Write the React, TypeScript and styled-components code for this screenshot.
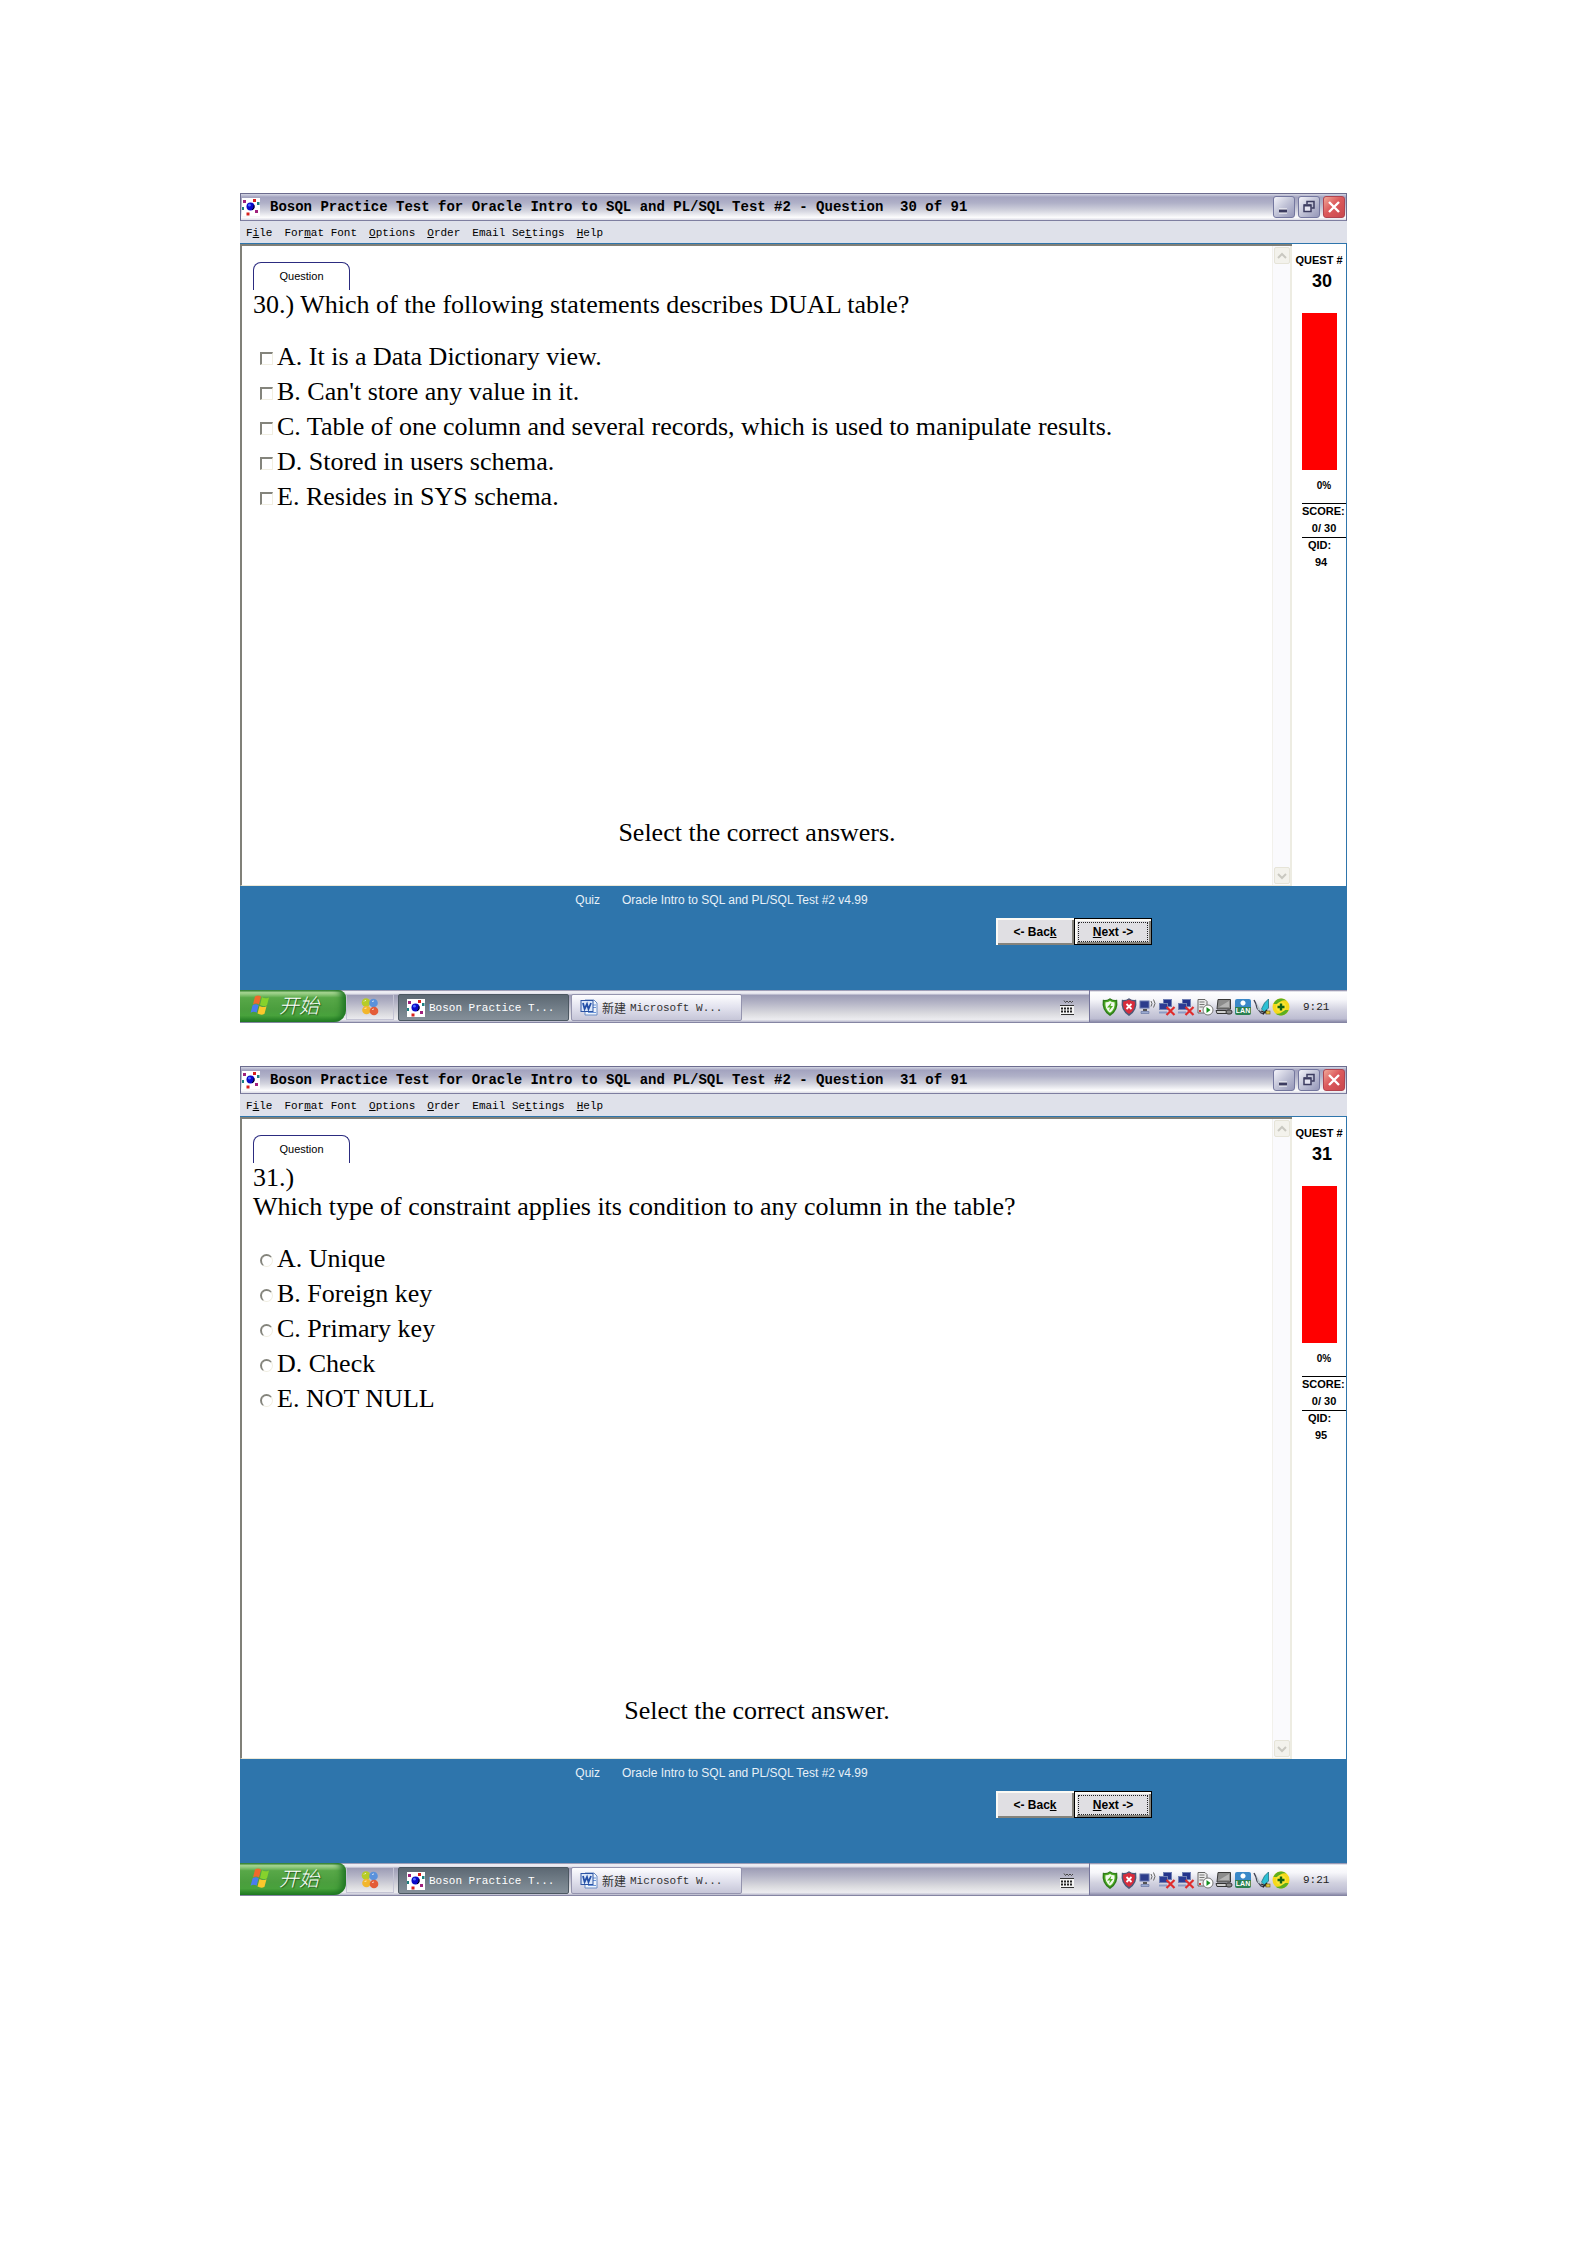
import React from "react";
import styled, { createGlobalStyle, css } from "styled-components";

const SANS = `"Liberation Sans", Arial, sans-serif`;
const SERIF = `"Liberation Serif", "Times New Roman", serif`;
const MONO = `"Liberation Mono", "Courier New", "Noto Sans CJK SC", monospace`;
const BLUE = "#2e75ac";

const GlobalStyle = createGlobalStyle`
  *, *::before, *::after { box-sizing: border-box; }
  body { margin: 0; background: #fff; color: #000; font-family: ${SANS}; }
  button { font: inherit; color: inherit; margin: 0; padding: 0; border: 0; background: none; }
  h1, h2, p, fieldset, dl, dd { margin: 0; padding: 0; border: 0; }
  svg { display: block; flex: none; }
`;

const Page = styled.main`
  display: flex;
  flex-direction: column;
  gap: 43px;
  padding: 193px 241px 193px 240px;
`;

const Screen = styled.section`
  display: flex;
  flex-direction: column;
  background: #fff;
`;

/* ---------- title bar ---------- */

const TitleBar = styled.header`
  display: flex;
  align-items: center;
  height: 28px;
  padding: 0 1px;
  border: 1px solid #6c6c8e;
  border-bottom-color: #7e7ea0;
  background: linear-gradient(#d4d6e4 0, #a3a3bf 12%, #b0b1c8 35%, #d4d5df 65%, #fcfcfd 90%, #dcdce6 100%);
`;

const Title = styled.h1`
  flex: 1;
  padding-left: 10px;
  font: bold 14px/20px ${MONO};
  white-space: pre;
  overflow: hidden;
`;

const WindowButtons = styled.div`
  display: flex;
  gap: 3px;
`;

const WindowButton = styled.button<{ $close?: boolean }>`
  display: grid;
  place-items: center;
  width: 22px;
  height: 22px;
  border: 1px solid ${(p) => (p.$close ? "#b04450" : "#74779f")};
  border-radius: 3px;
  background: ${(p) =>
    p.$close
      ? "linear-gradient(135deg, #f0a898, #dc5a5c 45%, #c8484e)"
      : "linear-gradient(135deg, #f4f4fa, #c0c2d6 50%, #9496b8)"};
`;

/* ---------- menu ---------- */

const MenuBar = styled.nav`
  display: flex;
  align-items: center;
  gap: 12px;
  height: 22px;
  padding: 1px 6px 0;
  background: #dfe1ea;
`;

const MenuItem = styled.button`
  font: 11px/18px ${MONO};
  white-space: nowrap;
`;

/* ---------- work area ---------- */

const WorkArea = styled.div`
  display: flex;
  min-height: 643px;
  border-top: 1px solid ${BLUE};
  border-right: 1px solid ${BLUE};
`;

const QuestionPane = styled.div`
  flex: 1;
  min-width: 0;
  display: flex;
  border: 2px solid #808078;
  border-right: 0;
  border-bottom: 1px solid #ece9d8;
`;

const QuestionBody = styled.div<{ $bottom: number }>`
  flex: 1;
  min-width: 0;
  display: flex;
  flex-direction: column;
  padding: 16px 0 ${(p) => p.$bottom}px 11px;
  font: 26px/29px ${SERIF};
`;

const Tab = styled.h2`
  width: 97px;
  height: 28px;
  border: 1px solid #2c2c80;
  border-bottom: 0;
  border-radius: 8px 8px 0 0;
  font: 11px/26px ${SANS};
  text-align: center;
`;

const QuestionText = styled.p`
  margin-bottom: 23px;
`;

const Options = styled.fieldset`
  display: flex;
  flex-direction: column;
  align-items: flex-start;
  gap: 6px;
  padding-left: 7px;
`;

const Option = styled.label`
  display: flex;
  align-items: baseline;
  gap: 4px;
`;

const Mark = styled.input`
  appearance: none;
  flex: none;
  width: 13px;
  height: 13px;
  margin: 0;
  border: 1px solid #f0eee2;
  ${(p) =>
    p.type === "radio"
      ? css`
          border-width: 2px 1px 1px 2px;
          border-radius: 50%;
          border-top-color: #84847c;
          border-left-color: #84847c;
        `
      : css`
          border-width: 2px 1px 1px 2px;
          border-top-color: #84847c;
          border-left-color: #84847c;
        `}
`;

const Prompt = styled.p`
  margin-top: auto;
  padding-right: 11px;
  text-align: center;
`;

const ScrollTrack = styled.div`
  display: flex;
  flex-direction: column;
  justify-content: space-between;
  align-items: center;
  width: 20px;
  padding: 1px 0;
  background: #fafafd;
  border-left: 1px solid #f2f1ec;
  border-right: 2px solid #edece2;
`;

const ScrollButton = styled.button`
  display: grid;
  place-items: center;
  width: 16px;
  height: 17px;
  border: 1px solid #e6e4d8;
  border-radius: 2px;
  background: #f3f2ec;
`;

/* ---------- score column ---------- */

const ScoreColumn = styled.aside`
  display: flex;
  flex-direction: column;
  align-items: center;
  width: 54px;
  padding-top: 8px;
  font: bold 11px/16px ${SANS};
  white-space: nowrap;
`;

const QuestionNumber = styled.div`
  padding-left: 6px;
  font-size: 18px;
  line-height: 26px;
`;

const Meter = styled.div`
  width: 35px;
  height: 157px;
  margin: 19px 0 8px;
  background: #f00;
`;

const Percent = styled.div`
  padding-left: 10px;
  font-size: 10px;
`;

const Stats = styled.dl`
  align-self: flex-end;
  width: 44px;
  margin-top: 9px;
`;

const StatLabel = styled.dt<{ $indent?: boolean }>`
  border-top: 1px solid #000;
  padding-left: ${(p) => (p.$indent ? 6 : 0)}px;
  line-height: 15px;
`;

const StatValue = styled.dd`
  height: 18px;
  padding-right: 6px;
  line-height: 18px;
  text-align: center;
`;

/* ---------- footer ---------- */

const Footer = styled.footer`
  display: flex;
  flex-direction: column;
  gap: 10px;
  height: 104px;
  padding-top: 6px;
  background: ${BLUE};
`;

const Caption = styled.div`
  display: flex;
  justify-content: center;
  gap: 22px;
  padding-right: 144px;
  color: #e8f1f8;
  font: 12px/16px ${SANS};
`;

const Navigation = styled.div`
  display: flex;
  justify-content: flex-end;
  padding-right: 195px;
`;

const NavButton = styled.button<{ $default?: boolean }>`
  width: 78px;
  height: 27px;
  padding: 2px;
  border: ${(p) => (p.$default ? "1px solid #000" : "0")};
  background: #e0dfe3;
  box-shadow: inset 2px 2px 0 #fbfaf5, inset -2px -2px 0 #85837c;
  font: bold 12px/18px ${SANS};
`;

const FocusRing = styled.span<{ $on?: boolean }>`
  display: block;
  margin: 0 1px;
  border: 1px dotted ${(p) => (p.$on ? "#222" : "transparent")};
`;

/* ---------- taskbar ---------- */

const Taskbar = styled.div`
  display: flex;
  align-items: stretch;
  height: 33px;
  border-bottom: 1px solid #8585a3;
  background: linear-gradient(#77779a 0, #f4f4f8 5%, #e0e0ea 12%, #9c9cb5 16%, #b4b4c6 40%, #dcdce0 75%, #ececf0 92%, #b8b8cc 100%);
`;

const StartButton = styled.button`
  display: flex;
  align-items: center;
  gap: 8px;
  width: 106px;
  padding: 0 0 2px 10px;
  border-radius: 0 8px 12px 0;
  background: linear-gradient(#2d7a2c 0, #b0dc9a 8%, #58a848 24%, #4b9e3e 60%, #48a23c 80%, #1f7a22 100%);
  box-shadow: inset -6px 0 6px -2px #1e7422;
  color: #fff;
  font: italic 300 20px/28px "Noto Sans CJK SC", sans-serif;
  text-shadow: 1px 1px 1px #235d20;
`;

const QuickLaunch = styled.button`
  display: grid;
  place-items: center;
  width: 48px;
  margin: 4px 4px 2px 0;
  border: 1px solid #c4c4d4;
`;

const Task = styled.button<{ $active?: boolean }>`
  display: flex;
  align-items: center;
  gap: 4px;
  height: 27px;
  width: 171px;
  margin: 4px 2px 0 0;
  padding-left: 8px;
  border: 1px solid ${(p) => (p.$active ? "#4c5862" : "#9494ae")};
  border-radius: 2px;
  background: ${(p) =>
    p.$active
      ? "linear-gradient(#5c6873, #75818b 60%, #85909a)"
      : "linear-gradient(#fdfdff, #e2e2ee 50%, #c6c6d8)"};
  color: ${(p) => (p.$active ? "#fff" : "#333")};
  font: 11px/16px ${MONO};
  white-space: nowrap;
`;

const CjkText = styled.span`
  font: 12px/16px "Noto Sans CJK SC", sans-serif;
`;

const InputMethod = styled.div`
  display: grid;
  place-items: center;
  margin-left: auto;
  padding: 4px 14px 0 0;
`;

const Tray = styled.div`
  display: flex;
  align-items: center;
  gap: 1px;
  width: 258px;
  padding: 2px 0 0 11px;
  border-left: 1px solid #75759a;
  background: linear-gradient(#77779a 0, #fff 6%, #f6f6fa 30%, #d2d2e0 62%, #bdbdd2 90%, #8a8aa8 100%);
`;

const Clock = styled.time`
  margin-left: 12px;
  color: #222;
  font: 11px/16px ${MONO};
`;

/* ---------- drawings ---------- */

const AtomIcon = () => (
  <svg width="18" height="18" viewBox="0 0 18 18" aria-hidden="true">
    <rect width="18" height="18" fill="#fff" />
    <circle cx="8.5" cy="8.5" r="4" fill="#0a0ac8" />
    <circle cx="7.4" cy="7.2" r="1.4" fill="#4a6cff" />
    <path d="M10 11.8l2-1.6v-3" fill="none" stroke="#000" strokeWidth="1" />
    <g fill="#a0207c">
      <rect x="1" y="2" width="3" height="3" />
      <rect x="13" y="12" width="3" height="3" />
    </g>
    <g fill="#d8201c">
      <rect x="11" y="1" width="3" height="3" />
      <rect x="4.5" y="14.5" width="3" height="3" />
    </g>
    <g fill="#1c8080">
      <rect x="0" y="9" width="2" height="3" />
      <rect x="15" y="4" width="2.5" height="3" />
    </g>
  </svg>
);

const FlagIcon = () => (
  <svg width="21" height="20" viewBox="0 0 21 20" aria-hidden="true">
    <path d="M5 1.500q3-2 6 0l-2 8q-3-2-6 0z" fill="#f0692c" />
    <path d="M12 2.200q3 2 7 .2l-2 7.800q-3 2-7-.2z" fill="#86d22c" />
    <path d="M2.600 10.200q3-2 6 0l-2 7.600q-3-2-6 0z" fill="#4a7cf0" />
    <path d="M9.500 11q3 2 7 .2l-2 7.600q-3 2-7-.2z" fill="#fbc82c" />
  </svg>
);

const QuickIcon = () => (
  <svg width="18" height="18" viewBox="0 0 18 18" aria-hidden="true">
    <circle cx="5" cy="4.500" r="4.300" fill="#b6cc28" />
    <circle cx="12.500" cy="5" r="4.300" fill="#5a92dc" />
    <circle cx="5.500" cy="12" r="4.300" fill="#f2b62c" />
    <circle cx="13" cy="13" r="4.300" fill="#e45c38" />
    <path d="M3 3.500a2 2 0 012-1M11 4a2 2 0 012-1M3.500 11a2 2 0 012-1M11 12a2 2 0 012-1" stroke="#fff" strokeOpacity=".7" fill="none" />
  </svg>
);

const WordIcon = () => (
  <svg width="18" height="17" viewBox="0 0 18 17" aria-hidden="true">
    <path d="M5 1h9l3 3v12H5z" fill="#eef4fc" stroke="#6a8cc4" />
    <path d="M13 6h3M13 8.500h3M8 13.500h8" stroke="#6a94d8" />
    <rect x="1" y="1.500" width="12" height="11" fill="#dce8fa" stroke="#2c54a4" />
    <path d="M3 4l1.600 6L7 5l1.500 5L11 4" fill="none" stroke="#2450a8" strokeWidth="1.800" />
  </svg>
);

const KeyboardIcon = () => (
  <svg width="16" height="16" viewBox="0 0 16 16" aria-hidden="true">
    <path d="M5 .5l1.500 2L8 1l1.500 1.500L11 1l1.500 1.500L14 1" fill="none" stroke="#444" />
    <rect x="1" y="5" width="14" height="10" rx="1" fill="#f4f4f4" />
    <path d="M1 5.500h14M2 14.500h13" stroke="#333" />
    <path d="M2 8.500h12M2 11.500h12" stroke="#222" strokeWidth="2" strokeDasharray="2 1" />
  </svg>
);

const TrayShield = ({ bad }: { bad?: boolean }) => (
  <svg width="18" height="18" viewBox="0 0 18 18" aria-hidden="true">
    <path
      d="M9 1q3 2 6.500 1.600Q17 12 9 17 1 12 2.500 2.600 6 3 9 1z"
      fill={bad ? "#d82c3c" : "#4fae22"}
      stroke={bad ? "#4c5878" : "#2f7c1c"}
      strokeWidth="1.500"
    />
    {bad ? (
      <path d="M6.500 6l5 5M11.500 6l-5 5" stroke="#fff" strokeWidth="1.800" />
    ) : (
      <>
        <path d="M9 3q2 1.500 4.500 1.300Q14.500 11 9 14.800 3.500 11 4.500 4.300 7 4.500 9 3z" fill="#f2faee" />
        <path d="M10.500 4.500L6 9.500h3L8 13l4-5H9.500z" fill="#4fae22" />
      </>
    )}
  </svg>
);

const TrayWireless = () => (
  <svg width="18" height="18" viewBox="0 0 18 18" aria-hidden="true">
    <rect x="1" y="3" width="9" height="7" fill="#2c3c8c" stroke="#6474ac" />
    <path d="M4 11h4v2H4z" fill="#555" />
    <path d="M2 13.500h8v2H2z" fill="#9cacd0" stroke="#5c6c9c" strokeWidth=".6" />
    <path d="M12 3q2 2.500 0 5.500M14.500 1.500q3 4 0 8" fill="none" stroke="#666" />
  </svg>
);

const TrayOffline = () => (
  <svg width="18" height="18" viewBox="0 0 18 18" aria-hidden="true">
    <rect x="5.5" y="1.5" width="8" height="7" fill="#24348c" stroke="#7080b4" />
    <rect x="1.5" y="5.5" width="8" height="6" fill="#2c3c94" stroke="#7080b4" />
    <path d="M1 13.500h8v2H1z" fill="#8c9cc4" />
    <path d="M8.500 9l8 8M16.500 9l-8 8" stroke="#e02c2c" strokeWidth="2.200" />
  </svg>
);

const TrayServer = () => (
  <svg width="18" height="18" viewBox="0 0 18 18" aria-hidden="true">
    <path d="M2 1.500h7l2 2V15H2z" fill="#e8e8e8" stroke="#666" />
    <path d="M3.500 4h5M3.500 6.500h5M3.500 9h4" stroke="#777" />
    <rect x="3" y="12" width="2" height="2" fill="#c33" />
    <circle cx="12" cy="12" r="5" fill="#fff" stroke="#777" />
    <path d="M10.500 9l4 3-4 3z" fill="#169020" />
  </svg>
);

const TrayLaptop = () => (
  <svg width="18" height="18" viewBox="0 0 18 18" aria-hidden="true">
    <path d="M3 1.500h12.500V11H2z" fill="#8c8c8c" stroke="#3a3a3a" />
    <path d="M4 9L14 3v6z" fill="#b4b4b4" />
    <path d="M1 12.500h10l2 3H2z" fill="#d0d0d0" stroke="#333" />
    <rect x="11" y="12" width="6" height="4" rx="2" fill="#888" stroke="#333" />
  </svg>
);

const LanBadge = styled.span`
  display: flex;
  align-items: flex-end;
  justify-content: center;
  width: 16px;
  height: 16px;
  margin: 0 1px;
  border-radius: 2px;
  background: radial-gradient(circle at 8px 4px, #fff 2px, transparent 3px), linear-gradient(#3a88c8 0 50%, #2c8050 50%);
  color: #fff;
  font: bold 7px/8px ${SANS};
`;

const TrayBird = () => (
  <svg width="18" height="18" viewBox="0 0 18 18" aria-hidden="true">
    <path d="M1 2l2 4 1 4 4 5 3 1" fill="none" stroke="#445" strokeWidth="1.400" />
    <path d="M3 4l4 7 2 2-4-1z" fill="#b4c4c8" />
    <path d="M15.500 1v9l-4 4-3-3 3-6z" fill="#2cc0d4" stroke="#146474" strokeWidth=".7" />
    <path d="M8 13l5 2M10 16l4-4" stroke="#222" strokeWidth="1.300" />
    <rect x="13" y="13" width="4" height="3" fill="#e4c83c" stroke="#665410" strokeWidth=".6" />
  </svg>
);

const TrayPlus = () => (
  <svg width="18" height="18" viewBox="0 0 18 18" aria-hidden="true">
    <circle cx="9" cy="9" r="8.500" fill="#f6d81c" />
    <path d="M1.500 6a8 8 0 0113-3.500q-6-1-8 3.500M16.500 12a8 8 0 01-13 3.500q6 1 8-3.500" fill="#5cae20" />
    <circle cx="9" cy="9" r="5" fill="#fbe834" />
    <path d="M9 5.500v7M5.500 9h7" stroke="#146014" strokeWidth="2.400" />
  </svg>
);

const Chevron = ({ down }: { down?: boolean }) => (
  <svg width="10" height="8" viewBox="0 0 10 8" aria-hidden="true">
    <path d={down ? "M1 2l4 4 4-4" : "M1 6l4-4 4 4"} fill="none" stroke="#c9c8c0" strokeWidth="2" />
  </svg>
);

/* ---------- data ---------- */

type Quiz = {
  number: number;
  lines: string[];
  kind: "checkbox" | "radio";
  options: string[];
  prompt: string;
  promptBottom: number;
  qid: number;
};

const quizzes: Quiz[] = [
  {
    number: 30,
    lines: ["30.) Which of the following statements describes DUAL table?"],
    kind: "checkbox",
    options: [
      "A. It is a Data Dictionary view.",
      "B. Can't store any value in it.",
      "C. Table of one column and several records, which is used to manipulate results.",
      "D. Stored in users schema.",
      "E. Resides in SYS schema.",
    ],
    prompt: "Select the correct answers.",
    promptBottom: 38,
    qid: 94,
  },
  {
    number: 31,
    lines: ["31.)", "Which type of constraint applies its condition to any column in the table?"],
    kind: "radio",
    options: ["A. Unique", "B. Foreign key", "C. Primary key", "D. Check", "E. NOT NULL"],
    prompt: "Select the correct answer.",
    promptBottom: 33,
    qid: 95,
  },
];

/* an underscore marks the access key that follows it */
const menu = ["F_ile", "For_mat Font", "_Options", "_Order", "Email Se_ttings", "_Help"];

const AccessText = ({ text }: { text: string }) => {
  const [before, after] = text.split("_");
  return (
    <>
      {before}
      <u>{after[0]}</u>
      {after.slice(1)}
    </>
  );
};

const QuizScreen = ({ quiz }: { quiz: Quiz }) => (
  <Screen>
    <TitleBar>
      <AtomIcon />
      <Title>{`Boson Practice Test for Oracle Intro to SQL and PL/SQL Test #2 - Question  ${quiz.number} of 91`}</Title>
      <WindowButtons>
        <WindowButton aria-label="Minimize">
          <svg width="16" height="16" viewBox="0 0 16 16">
            <path d="M3 12h8" stroke="#fff" strokeWidth="5" />
            <path d="M3 12h8" stroke="#3c3c60" strokeWidth="3" />
          </svg>
        </WindowButton>
        <WindowButton aria-label="Restore">
          <svg width="16" height="16" viewBox="0 0 16 16">
            <path d="M6 5V2.500h7V9h-2.500" fill="none" stroke="#3c3c60" strokeWidth="1.500" />
            <rect x="3" y="6" width="7" height="6.500" fill="#e4e4f0" stroke="#3c3c60" strokeWidth="1.500" />
            <path d="M3 6.500h7" stroke="#3c3c60" strokeWidth="2" />
          </svg>
        </WindowButton>
        <WindowButton $close aria-label="Close">
          <svg width="16" height="16" viewBox="0 0 16 16">
            <path d="M3 3l10 10M13 3L3 13" stroke="#fff" strokeWidth="2.400" />
          </svg>
        </WindowButton>
      </WindowButtons>
    </TitleBar>

    <MenuBar>
      {menu.map((item) => (
        <MenuItem key={item}>
          <AccessText text={item} />
        </MenuItem>
      ))}
    </MenuBar>

    <WorkArea>
      <QuestionPane>
        <QuestionBody $bottom={quiz.promptBottom}>
          <Tab>Question</Tab>
          <QuestionText>
            {quiz.lines.map((line, i) => (
              <React.Fragment key={line}>
                {i > 0 && <br />}
                {line}
              </React.Fragment>
            ))}
          </QuestionText>
          <Options aria-label="Answers">
            {quiz.options.map((option) => (
              <Option key={option}>
                <Mark type={quiz.kind} name={`question-${quiz.number}`} />
                {option}
              </Option>
            ))}
          </Options>
          <Prompt>{quiz.prompt}</Prompt>
        </QuestionBody>
        <ScrollTrack>
          <ScrollButton aria-label="Scroll up">
            <Chevron />
          </ScrollButton>
          <ScrollButton aria-label="Scroll down">
            <Chevron down />
          </ScrollButton>
        </ScrollTrack>
      </QuestionPane>
      <ScoreColumn>
        <div>QUEST #</div>
        <QuestionNumber>{quiz.number}</QuestionNumber>
        <Meter />
        <Percent>0%</Percent>
        <Stats>
          <StatLabel>SCORE:</StatLabel>
          <StatValue>&nbsp; 0/ 30</StatValue>
          <StatLabel $indent>QID:</StatLabel>
          <StatValue>{quiz.qid}</StatValue>
        </Stats>
      </ScoreColumn>
    </WorkArea>

    <Footer>
      <Caption>
        <span>Quiz</span>
        <span>Oracle Intro to SQL and PL/SQL Test #2 v4.99</span>
      </Caption>
      <Navigation>
        <NavButton>
          <FocusRing>
            <AccessText text="<- Bac_k" />
          </FocusRing>
        </NavButton>
        <NavButton $default>
          <FocusRing $on>
            <AccessText text="_Next ->" />
          </FocusRing>
        </NavButton>
      </Navigation>
    </Footer>

    <Taskbar>
      <StartButton>
        <FlagIcon />
        开始
      </StartButton>
      <QuickLaunch aria-label="Quick launch">
        <QuickIcon />
      </QuickLaunch>
      <Task $active>
        <AtomIcon />
        Boson Practice T...
      </Task>
      <Task>
        <WordIcon />
        <CjkText>新建</CjkText>
        Microsoft W...
      </Task>
      <InputMethod>
        <KeyboardIcon />
      </InputMethod>
      <Tray>
        <TrayShield />
        <TrayShield bad />
        <TrayWireless />
        <TrayOffline />
        <TrayOffline />
        <TrayServer />
        <TrayLaptop />
        <LanBadge>LAN</LanBadge>
        <TrayBird />
        <TrayPlus />
        <Clock>9:21</Clock>
      </Tray>
    </Taskbar>
  </Screen>
);

export default function App() {
  return (
    <>
      <GlobalStyle />
      <Page>
        {quizzes.map((quiz) => (
          <QuizScreen key={quiz.number} quiz={quiz} />
        ))}
      </Page>
    </>
  );
}
